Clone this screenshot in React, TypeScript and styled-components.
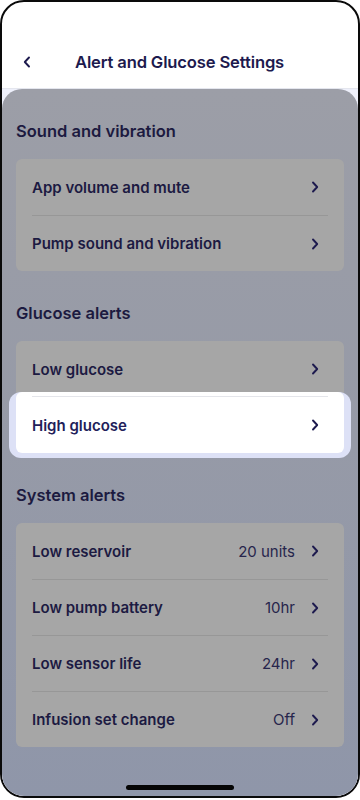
import React from "react";
import styled, { createGlobalStyle } from "styled-components";

const GlobalStyle = createGlobalStyle`
  html, body {
    margin: 0;
    padding: 0;
    background: #ffffff;
  }
  body {
    font-family: "Inter", "Lato", "Noto Sans", sans-serif;
    -webkit-font-smoothing: antialiased;
  }
`;

interface IRow {
  label: string;
  value?: string;
}

const sections: { title: string; rows: IRow[] }[] = [
  {
    title: "Sound and vibration",
    rows: [{ label: "App volume and mute" }, { label: "Pump sound and vibration" }],
  },
  {
    title: "Glucose alerts",
    rows: [{ label: "Low glucose" }, { label: "High glucose" }],
  },
  {
    title: "System alerts",
    rows: [
      { label: "Low reservoir", value: "20 units" },
      { label: "Low pump battery", value: "10hr" },
      { label: "Low sensor life", value: "24hr" },
      { label: "Infusion set change", value: "Off" },
    ],
  },
];

const HIGHLIGHTED = "High glucose";

const Chevron = ({ left }: { left?: boolean }) => (
  <svg width="8" height="12" viewBox="0 0 8 12" fill="none">
    <path
      d={left ? "M6 1.5L1.8 6L6 10.5" : "M2 1.5L6.2 6L2 10.5"}
      stroke="#1d1a4e"
      strokeWidth="1.9"
      strokeLinecap="round"
      strokeLinejoin="round"
    />
  </svg>
);

const App = (): JSX.Element => (
  <>
    <GlobalStyle />
    <Phone>
      <Header>
        <BackButton>
          <Chevron left />
        </BackButton>
        <Title>Alert and Glucose Settings</Title>
      </Header>
      <Backdrop>
        <Panel>
          {sections.map((section) => (
            <Section key={section.title}>
              <SectionTitle>{section.title}</SectionTitle>
              <Card>
                {section.rows.map((row, i) =>
                  row.label === HIGHLIGHTED ? (
                    <Glow key={row.label}>
                      <ActiveRow>
                        <RowLabel $active>{row.label}</RowLabel>
                        <Chevron />
                      </ActiveRow>
                    </Glow>
                  ) : (
                    <Row key={row.label} $divider={i > 0}>
                      <RowLabel>{row.label}</RowLabel>
                      {row.value && <RowValue>{row.value}</RowValue>}
                      <Chevron />
                    </Row>
                  )
                )}
              </Card>
            </Section>
          ))}
          <Spacer />
          <HomeBar />
        </Panel>
      </Backdrop>
    </Phone>
  </>
);

const Phone = styled.div`
  width: 360px;
  height: 798px;
  box-sizing: border-box;
  border: 2px solid #0a0a0a;
  border-radius: 24px;
  overflow: hidden;
  display: flex;
  flex-direction: column;
  background: #ffffff;
`;

const Header = styled.div`
  height: 87px;
  flex-shrink: 0;
  display: flex;
  align-items: center;
  padding: 34px 0 0 21px;
  box-sizing: border-box;
  border-bottom: 1px solid #e4e6ee;
`;

const BackButton = styled.div`
  width: 10px;
  display: flex;
  align-items: center;
  margin-right: 42px;
`;

const Title = styled.div`
  font-size: 16.6px;
  font-weight: 600;
  color: #1d1a4e;
  letter-spacing: -0.15px;
`;

const Backdrop = styled.div`
  flex: 1;
  display: flex;
  flex-direction: column;
  background: #eef0fb;
`;

const Panel = styled.div`
  flex: 1;
  display: flex;
  flex-direction: column;
  padding: 28px 14px 0 14px;
  border-radius: 20px 20px 0 0;
  background: linear-gradient(180deg, #9c9ea7 0%, #969aa7 50%, #8f96a9 100%);
`;

const Section = styled.div`
  display: flex;
  flex-direction: column;
  gap: 14px;
  margin-bottom: 28px;
`;

const SectionTitle = styled.div`
  height: 28px;
  line-height: 28px;
  font-size: 16.5px;
  font-weight: 600;
  color: #1c1a40;
`;

const Card = styled.div`
  display: flex;
  flex-direction: column;
  border-radius: 6px;
  background: #a6a6a6;
`;

const Row = styled.div<{ $divider?: boolean }>`
  height: 56px;
  box-sizing: border-box;
  display: flex;
  align-items: center;
  margin: 0 16px;
  padding-right: 9px;
  border-top: ${(p) => (p.$divider ? "1px solid #979797" : "none")};
`;

const Glow = styled.div`
  position: relative;
  margin: -5px -7px -5px -7px;
  padding: 0 7px 5px 7px;
  border-radius: 12px;
  background: #dde1f6;
`;

const ActiveRow = styled.div`
  height: 61px;
  box-sizing: border-box;
  display: flex;
  align-items: center;
  padding: 5px 25px 0 16px;
  border-radius: 6px;
  background-color: #ffffff;
  background-image: linear-gradient(#e4e5ea, #e4e5ea);
  background-size: calc(100% - 32px) 1px;
  background-position: 16px 4px;
  background-repeat: no-repeat;
`;

const RowLabel = styled.div<{ $active?: boolean }>`
  flex: 1;
  font-size: 15px;
  font-weight: 600;
  color: ${(p) => (p.$active ? "#221e5a" : "#1c1a42")};
`;

const RowValue = styled.div`
  font-size: 15px;
  font-weight: 400;
  color: #27254c;
  margin-right: 16px;
`;

const Spacer = styled.div`
  flex: 1;
`;

const HomeBar = styled.div`
  align-self: center;
  width: 108px;
  height: 5px;
  border-radius: 3px;
  background: #050505;
  margin-bottom: 6px;
`;

export default App;
